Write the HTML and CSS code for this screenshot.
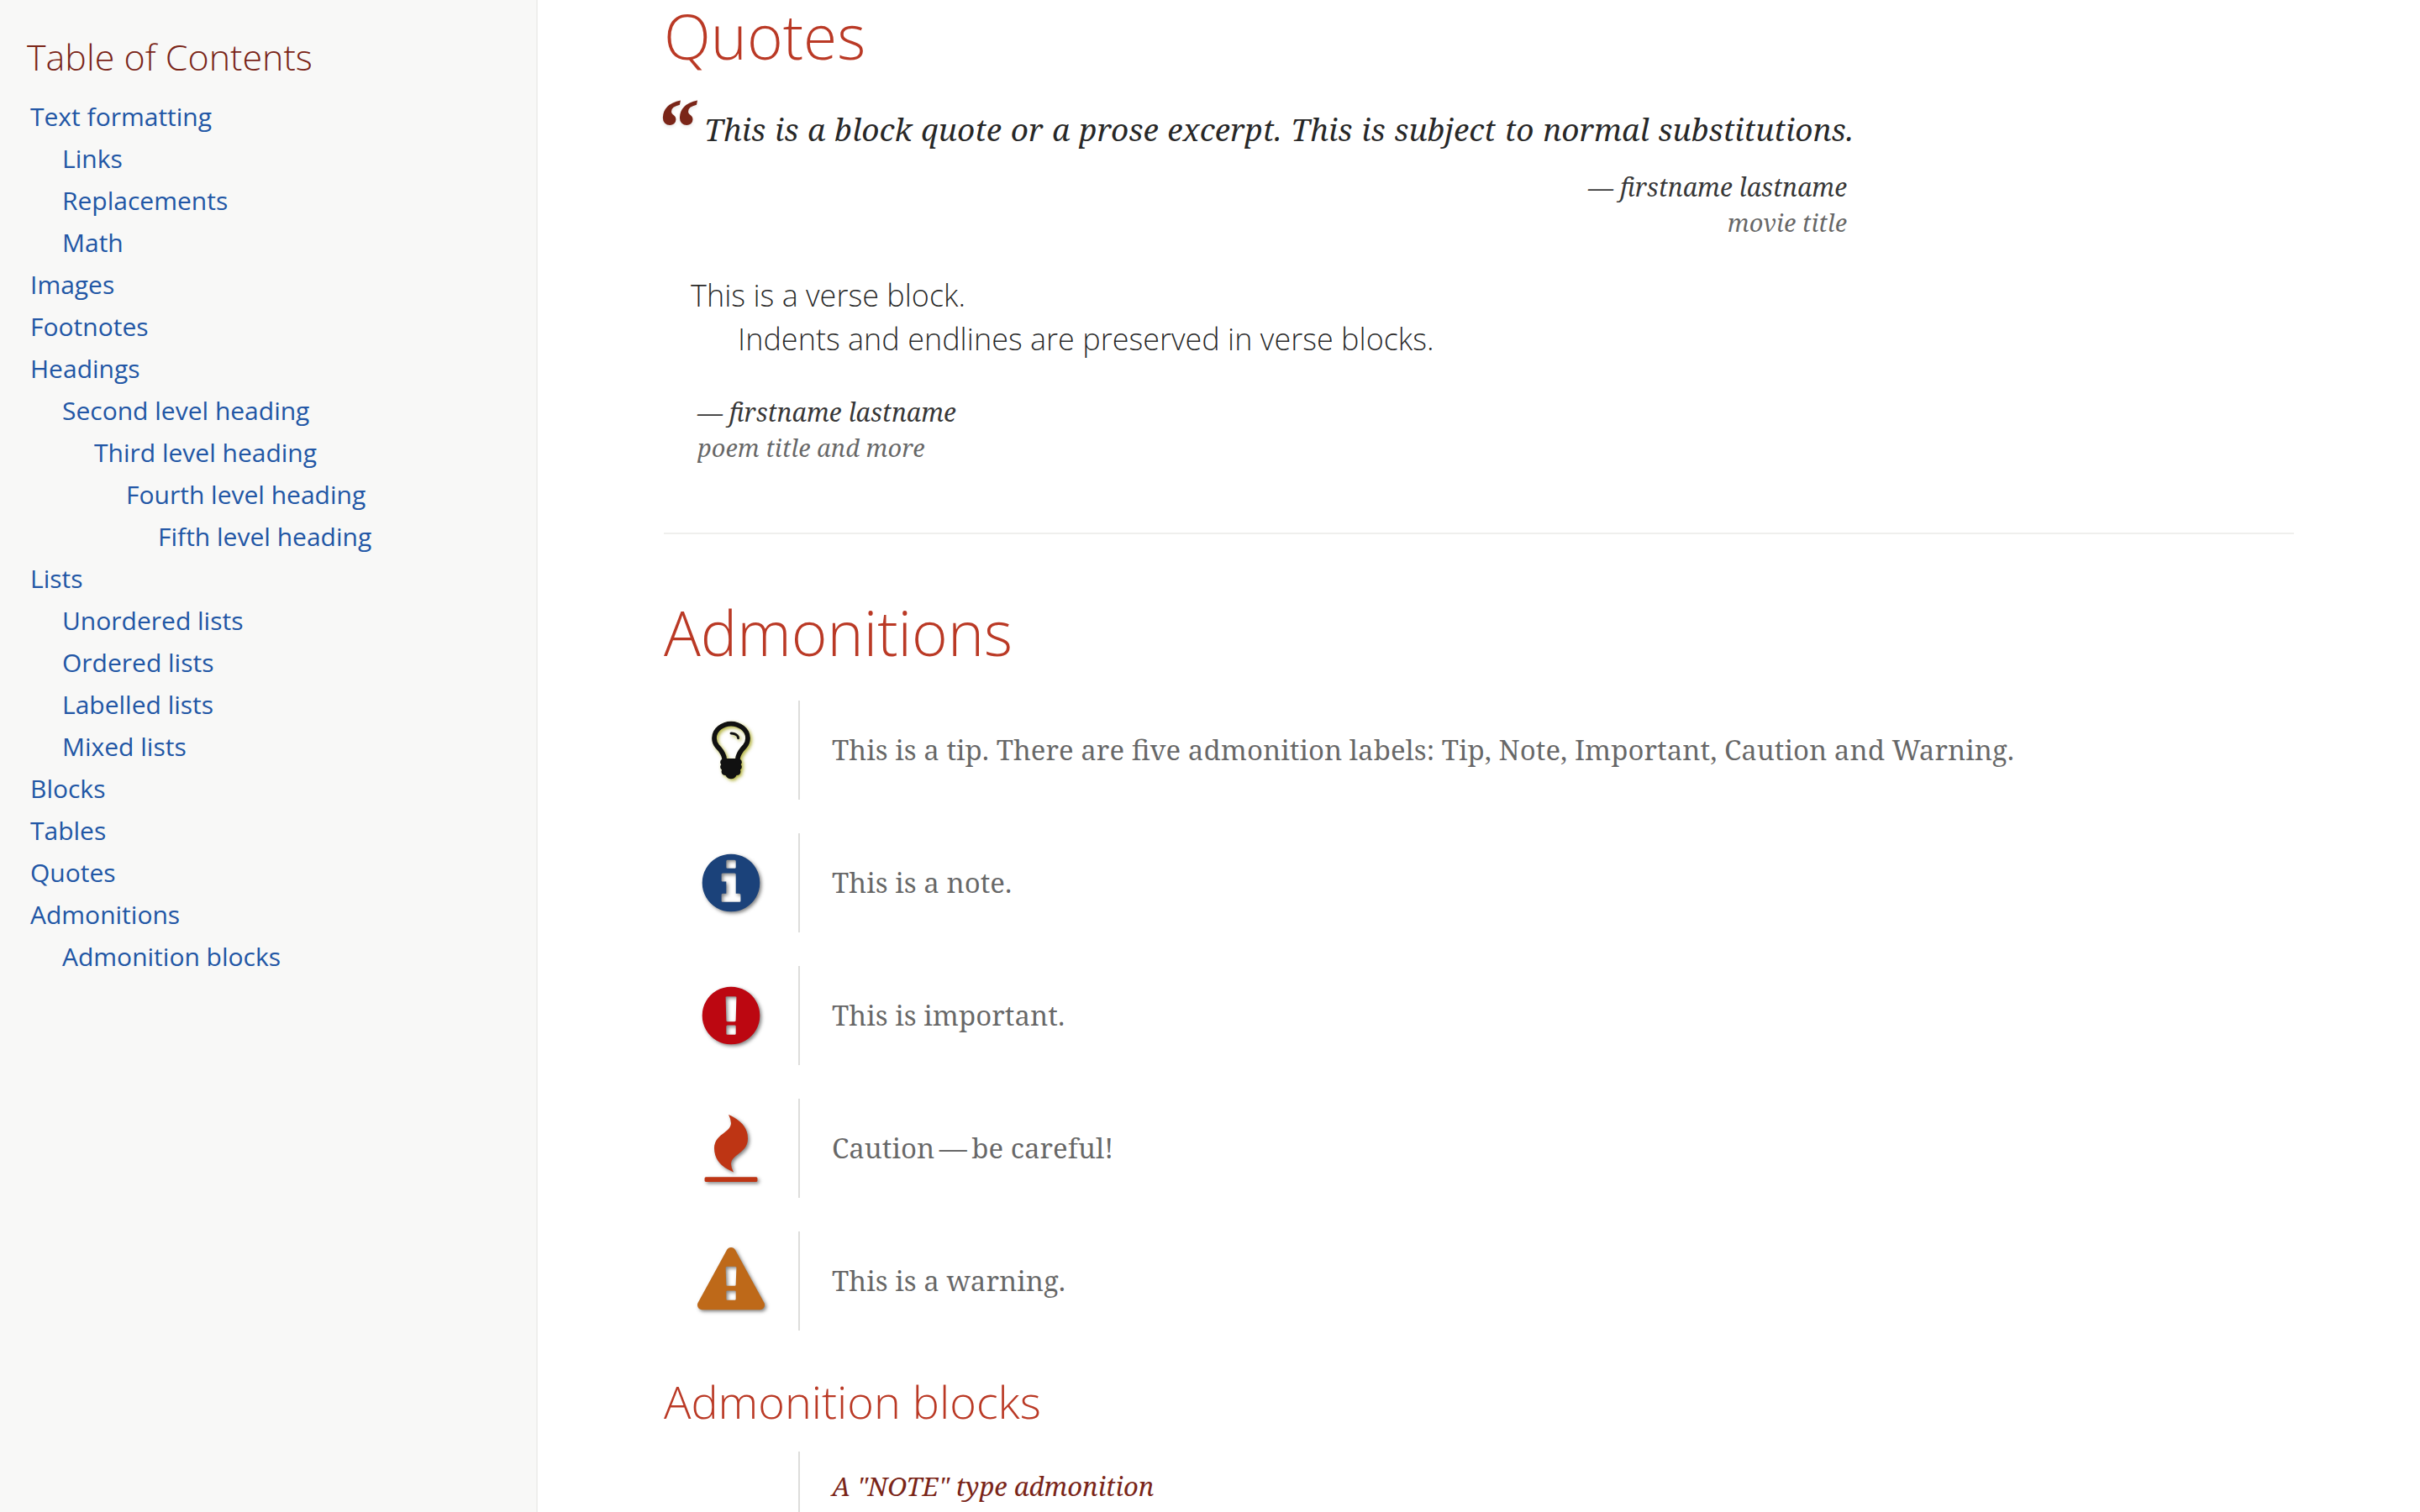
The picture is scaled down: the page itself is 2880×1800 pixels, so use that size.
FILE: index.html
```html
<!DOCTYPE html>
<html lang="en">
<head>
<meta charset="utf-8">
<title>Quotes and admonitions</title>
<link rel="stylesheet" href="styles.css">
</head>
<body class="page">
<nav class="toc" aria-labelledby="toc-title">
  <h2 class="toc-title" id="toc-title">Table of Contents</h2>
  <ul class="toc-list">
    <li><a href="#formatting">Text formatting</a>
      <ul>
        <li><a href="#links">Links</a></li>
        <li><a href="#replacements">Replacements</a></li>
        <li><a href="#math">Math</a></li>
      </ul>
    </li>
    <li><a href="#images">Images</a></li>
    <li><a href="#footnotes">Footnotes</a></li>
    <li><a href="#headings">Headings</a>
      <ul>
        <li><a href="#second">Second level heading</a>
          <ul>
            <li><a href="#third">Third level heading</a>
              <ul>
                <li><a href="#fourth">Fourth level heading</a>
                  <ul>
                    <li><a href="#fifth">Fifth level heading</a></li>
                  </ul>
                </li>
              </ul>
            </li>
          </ul>
        </li>
      </ul>
    </li>
    <li><a href="#lists">Lists</a>
      <ul>
        <li><a href="#unordered">Unordered lists</a></li>
        <li><a href="#ordered">Ordered lists</a></li>
        <li><a href="#labelled">Labelled lists</a></li>
        <li><a href="#mixed">Mixed lists</a></li>
      </ul>
    </li>
    <li><a href="#blocks">Blocks</a></li>
    <li><a href="#tables">Tables</a></li>
    <li><a href="#quotes">Quotes</a></li>
    <li><a href="#admonitions">Admonitions</a>
      <ul>
        <li><a href="#admonition-blocks">Admonition blocks</a></li>
      </ul>
    </li>
  </ul>
</nav>
<main class="content">
  <section class="section" aria-labelledby="quotes">
    <h2 class="heading" id="quotes">Quotes</h2>
    <figure class="quote">
      <span class="quote-mark" aria-hidden="true">“</span>
      <div class="quote-body">
        <blockquote class="quote-text">This is a block quote or a prose excerpt. This is subject to normal substitutions.</blockquote>
        <figcaption class="attribution attribution-right">— firstname lastname<cite>movie title</cite></figcaption>
      </div>
    </figure>
    <figure class="verse">
      <pre class="verse-text">This is a verse block.
      Indents and endlines are preserved in verse blocks.</pre>
      <figcaption class="attribution">— firstname lastname<cite>poem title and more</cite></figcaption>
    </figure>
  </section>
  <section class="section section-next" aria-labelledby="admonitions">
    <h2 class="heading" id="admonitions">Admonitions</h2>
    <div class="admonitions">
      <div class="admonition">
        <svg class="icon icon-tip" viewBox="0 0 1792 1792" role="img" aria-label="Tip"><path d="M1120 576q0 13-9.500 22.500t-22.500 9.500-22.500-9.500-9.500-22.500q0-46-54-71t-106-25q-13 0-22.500-9.500t-9.500-22.500 9.500-22.500 22.500-9.500q50 0 99.500 16t87 54 37.500 90zm160 0q0-72-34.500-134t-90-101.500-123-62-136.500-22.500-136.500 22.500-123 62-90 101.500-34.500 134q0 101 68 180 10 11 30.500 33t30.500 33q128 153 141 298h228q13-145 141-298 10-11 30.500-33t30.500-33q68-79 68-180zm128 0q0 155-103 268-45 49-74.500 87t-59.500 95.500-34 107.500q47 28 47 82 0 37-25 64 25 27 25 64 0 52-45 81 13 23 13 47 0 46-31.500 71t-77.500 25q-20 44-60 70t-87 26-87-26-60-70q-46 0-77.500-25t-31.500-71q0-24 13-47-45-29-45-81 0-37 25-64-25-27-25-64 0-54 47-82-4-50-34-107.500t-59.500-95.500-74.500-87q-103-113-103-268 0-99 44.500-184.500t117-142 164-89 186.500-32.500 186.500 32.500 164 89 117 142 44.500 184.500z"/></svg>
        <p class="admonition-text">This is a tip. There are five admonition labels: Tip, Note, Important, Caution and Warning.</p>
      </div>
      <div class="admonition">
        <svg class="icon icon-note" viewBox="0 0 1792 1792" role="img" aria-label="Note"><path d="M1152 1376v-160q0-14-9-23t-23-9h-96v-512q0-14-9-23t-23-9h-320q-14 0-23 9t-9 23v160q0 14 9 23t23 9h96v320h-96q-14 0-23 9t-9 23v160q0 14 9 23t23 9h448q14 0 23-9t9-23zm-128-896v-160q0-14-9-23t-23-9h-192q-14 0-23 9t-9 23v160q0 14 9 23t23 9h192q14 0 23-9t9-23zm640 416q0 209-103 385.500t-279.500 279.500-385.500 103-385.500-103-279.500-279.500-103-385.500 103-385.500 279.500-279.500 385.500-103 385.500 103 279.500 279.500 103 385.500z"/></svg>
        <p class="admonition-text">This is a note.</p>
      </div>
      <div class="admonition">
        <svg class="icon icon-important" viewBox="0 0 1792 1792" role="img" aria-label="Important"><path d="M896 128q209 0 385.500 103t279.500 279.500 103 385.500-103 385.500-279.500 279.500-385.500 103-385.500-103-279.500-279.500-103-385.500 103-385.500 279.500-279.500 385.500-103zm128 1247v-190q0-14-9-23.500t-22-9.500h-192q-13 0-23 10t-10 23v190q0 13 10 23t23 10h192q13 0 22-9.500t9-23.500zm-2-344l18-621q0-12-10-18-10-8-24-8h-220q-14 0-24 8-10 6-10 18l17 621q0 10 10 17.500t24 7.500h185q14 0 23.500-7.500t10.500-17.500z"/></svg>
        <p class="admonition-text">This is important.</p>
      </div>
      <div class="admonition">
        <svg class="icon icon-caution" viewBox="0 0 1792 1792" role="img" aria-label="Caution"><path d="M1600 1696v64q0 13-9.500 22.500t-22.500 9.500h-1344q-13 0-22.500-9.500t-9.500-22.500v-64q0-13 9.500-22.500t22.500-9.500h1344q13 0 22.500 9.500t9.500 22.500zm-256-1056q0 78-24.500 144t-64 112.500-87.500 88-96 77.500-87.500 72-64 81.500-24.500 96.500q0 96 67 224l-4-1 1 1q-90-41-160-83t-138.500-100-113.500-122.500-72.500-150.500-27.500-184q0-78 24.500-144t64-112.500 87.500-88 96-77.500 87.500-72 64-81.500 24.500-96.500q0-94-66-224l3 1-1-1q90 41 160 83t138.500 100 113.500 122.500 72.500 150.500 27.500 184z"/></svg>
        <p class="admonition-text">Caution&#8201;—&#8201;be careful!</p>
      </div>
      <div class="admonition">
        <svg class="icon icon-warning" viewBox="0 0 1792 1792" role="img" aria-label="Warning"><path d="M1024 1375v-190q0-14-9.500-23.500t-22.500-9.500h-192q-13 0-22.500 9.500t-9.500 23.500v190q0 14 9.500 23.500t22.500 9.500h192q13 0 22.500-9.500t9.500-23.500zm-2-374l18-459q0-12-10-19-13-11-24-11h-220q-11 0-24 11-10 7-10 21l17 457q0 10 10 16.500t24 6.500h185q14 0 23.500-6.500t10.500-16.500zm-14-934l768 1408q35 63-2 126-17 29-46.500 46t-63.500 17h-1536q-34 0-63.500-17t-46.500-46q-37-63-2-126l768-1408q17-31 47-49t65-18 65 18 47 49z"/></svg>
        <p class="admonition-text">This is a warning.</p>
      </div>
    </div>
    <h3 class="subheading" id="admonition-blocks">Admonition blocks</h3>
    <div class="admonition admonition-block">
      <h4 class="block-title">A "NOTE" type admonition</h4>
    </div>
  </section>
</main>
</body>
</html>
```
FILE: styles.css
```css
* {
  box-sizing: border-box;
}

.page {
  display: grid;
  grid-template-columns: 640px minmax(0, 1fr);
  min-height: 100vh;
  margin: 0;
  background: #fff;
  color: rgba(0, 0, 0, 0.8);
  font-family: "Noto Serif", "Droid Serif", "Liberation Serif", serif;
}

h2, h3, h4, p, ul, figure, blockquote, pre {
  margin: 0;
  padding: 0;
  font-weight: 400;
}

/* Sidebar */
.toc {
  padding: 38px 32px;
  border-right: 2px solid #efefed;
  background: #f8f8f7;
  font-family: "Open Sans", "DejaVu Sans", sans-serif;
}

.toc-title {
  margin-bottom: 16px;
  color: #7a2518;
  font-size: 43px;
  font-weight: 300;
  line-height: 60px;
}

.toc ul {
  padding-left: 38px;
  font-size: 30px;
  line-height: 50px;
  list-style: none;
}

.toc .toc-list {
  padding-left: 4px;
}

.toc a {
  color: #2156a5;
  text-decoration: none;
}

/* Article */
.content {
  display: flex;
  flex-direction: column;
  width: 100%;
  max-width: 2000px;
  margin: 0 auto;
  padding: 0 30px;
}

.section-next {
  display: flex;
  flex: 1;
  flex-direction: column;
  margin-top: 80px;
  padding-top: 74px;
  border-top: 2px solid #efefed;
}

.heading,
.subheading {
  color: #ba3925;
  font-family: "Open Sans", "DejaVu Sans", sans-serif;
  font-weight: 300;
}

.heading {
  font-size: 73px;
  line-height: 86px;
}

.subheading {
  margin: 52px 0 28px;
  font-size: 54px;
  line-height: 64px;
}

/* The opening mark hangs into the left margin */
.quote {
  display: grid;
  grid-template-columns: 60px minmax(0, 1fr);
  max-width: 1428px;
  margin: 22px 0 0 -12px;
}

.quote-mark {
  height: 88px;
  color: #7a2518;
  font-size: 96px;
  font-style: italic;
  font-weight: 700;
  line-height: 88px;
  text-shadow: 0 2px 4px rgba(0, 0, 0, 0.1);
}

.quote-text {
  padding-top: 18px;
  color: rgba(0, 0, 0, 0.85);
  font-size: 37px;
  font-style: italic;
  line-height: 56px;
  text-align: justify;
  text-align-last: justify;
}

.attribution {
  font-size: 30px;
  font-style: italic;
  line-height: 42px;
}

.attribution-right {
  padding: 20px 8px 0 0;
  text-align: right;
}

.attribution cite {
  display: block;
  color: rgba(0, 0, 0, 0.6);
  font-size: 29px;
}

.verse {
  margin-top: 40px;
  padding-left: 32px;
}

.verse-text {
  color: rgba(0, 0, 0, 0.85);
  font-family: "Open Sans", "DejaVu Sans", sans-serif;
  font-size: 36px;
  font-weight: 300;
  line-height: 52px;
  white-space: pre-wrap;
}

.verse .attribution {
  padding: 40px 0 0 8px;
}

.admonitions {
  display: grid;
  gap: 40px;
  margin-top: 38px;
}

.admonition {
  display: grid;
  grid-template-columns: 160px minmax(0, 1fr);
  align-items: center;
}

.admonition-text {
  padding: 32px 40px 32px 38px;
  border-left: 2px solid #dddddb;
  color: rgba(0, 0, 0, 0.6);
  font-size: 33px;
  line-height: 54px;
}

.admonition-block {
  flex: 1;
  align-items: stretch;
}

.block-title {
  grid-column: 2;
  padding: 18px 0 0 38px;
  border-left: 2px solid #dddddb;
  color: #7a2518;
  font-size: 31px;
  font-style: italic;
  line-height: 46px;
}

.icon {
  justify-self: center;
  width: 80px;
  height: 80px;
  overflow: visible;
  fill: currentColor;
  filter: drop-shadow(2px 2px 2px rgba(0, 0, 0, 0.5));
}

.icon-tip {
  color: #111;
  filter: drop-shadow(2px 2px 2px rgba(155, 155, 0, 0.8));
}

.icon-note {
  color: #1b427a;
}

.icon-important {
  color: #bc0711;
}

.icon-caution {
  color: #be3514;
}

.icon-warning {
  color: #be6919;
}
```
